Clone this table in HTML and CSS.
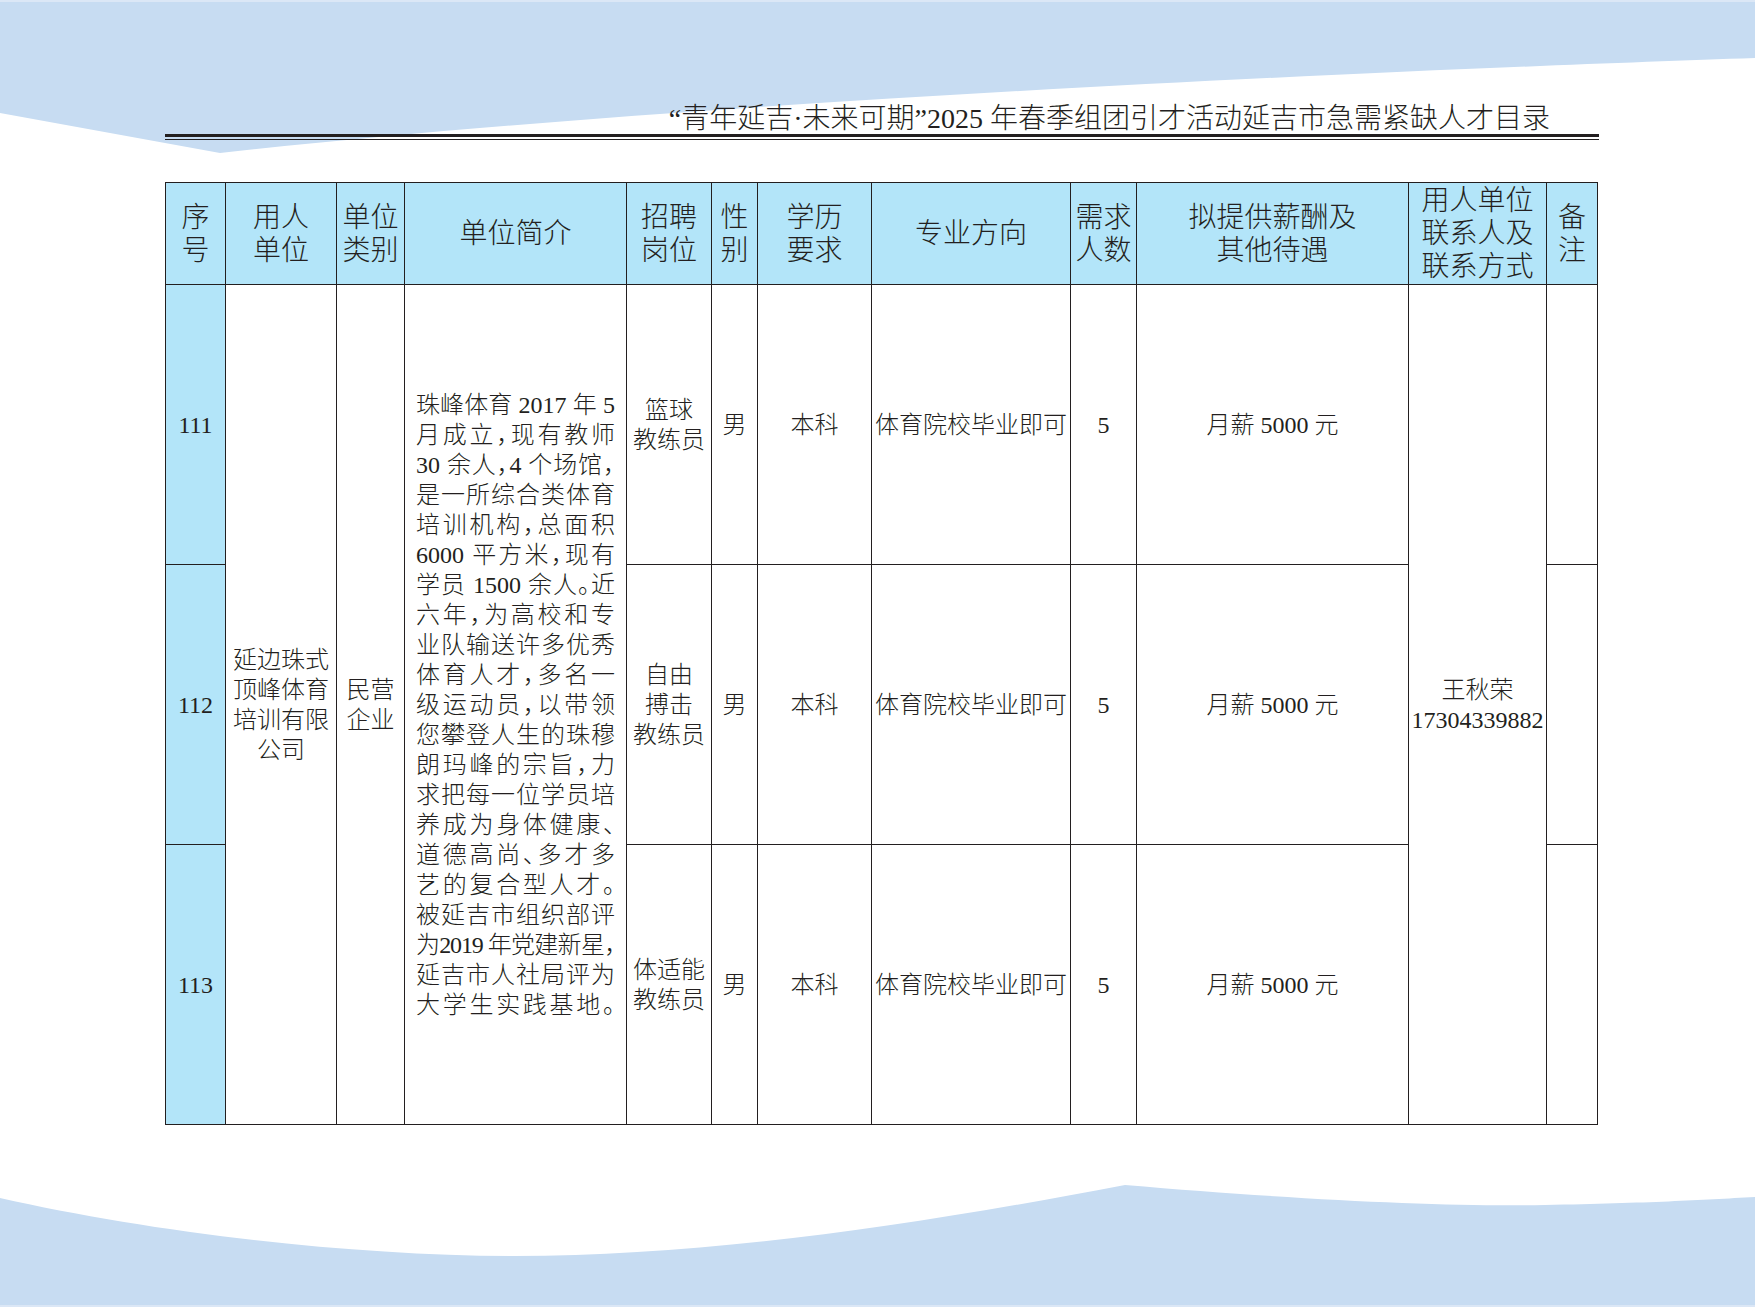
FILE: index.html
```html
<!DOCTYPE html>
<html lang="zh-CN">
<head>
<meta charset="utf-8">
<title>人才目录</title>
<link rel="stylesheet" href="styles.css">
</head>
<body>
<div class="page">
  <svg class="bg" viewBox="0 0 1755 1307" width="1755" height="1307" aria-hidden="true">
    <path class="wave" d="M0,0 H1755 V58 C1400,70 700,100 220,153 L0,113 Z"/>
    <path class="wave" d="M0,1198 C150,1232 350,1256 515,1256 C700,1256 900,1228 1125,1185 C1300,1200 1450,1207 1545,1205 C1650,1203 1700,1200 1755,1197 V1307 H0 Z"/>
    <rect class="edge" x="0" y="0" width="1755" height="2"/>
    <rect class="edge" x="0" y="1305" width="1755" height="2"/>
  </svg>
  <div class="sheet">
    <h1 class="title">“青年延吉·未来可期”2025 年春季组团引才活动延吉市急需紧缺人才目录</h1>
    <div class="rule"></div>
    <table class="grid">
      <colgroup>
        <col class="w-idx"><col class="w-org"><col class="w-type"><col class="w-intro">
        <col class="w-post"><col class="w-sex"><col class="w-edu"><col class="w-major">
        <col class="w-num"><col class="w-pay"><col class="w-contact"><col class="w-note">
      </colgroup>
      <thead>
        <tr class="head">
          <th>序<br>号</th>
          <th>用人<br>单位</th>
          <th>单位<br>类别</th>
          <th>单位简介</th>
          <th>招聘<br>岗位</th>
          <th>性<br>别</th>
          <th>学历<br>要求</th>
          <th>专业方向</th>
          <th>需求<br>人数</th>
          <th>拟提供薪酬及<br>其他待遇</th>
          <th>用人单位<br>联系人及<br>联系方式</th>
          <th>备<br>注</th>
        </tr>
      </thead>
      <tbody>
        <tr class="row">
          <td class="idx">111</td>
          <td rowspan="3">延边珠式<br>顶峰体育<br>培训有限<br>公司</td>
          <td rowspan="3">民营<br>企业</td>
          <td rowspan="3" class="intro">
            <span class="ln">珠峰体育 2017 年 5</span>
            <span class="ln">月成立，现有教师</span>
            <span class="ln">30 余人，4 个场馆，</span>
            <span class="ln">是一所综合类体育</span>
            <span class="ln">培训机构，总面积</span>
            <span class="ln">6000 平方米，现有</span>
            <span class="ln">学员 1500 余人。近</span>
            <span class="ln">六年，为高校和专</span>
            <span class="ln">业队输送许多优秀</span>
            <span class="ln">体育人才，多名一</span>
            <span class="ln">级运动员，以带领</span>
            <span class="ln">您攀登人生的珠穆</span>
            <span class="ln">朗玛峰的宗旨，力</span>
            <span class="ln">求把每一位学员培</span>
            <span class="ln">养成为身体健康、</span>
            <span class="ln">道德高尚、多才多</span>
            <span class="ln">艺的复合型人才。</span>
            <span class="ln">被延吉市组织部评</span>
            <span class="ln tight">为2019 年党建新星，</span>
            <span class="ln">延吉市人社局评为</span>
            <span class="ln">大学生实践基地。</span>
          </td>
          <td>篮球<br>教练员</td>
          <td>男</td>
          <td>本科</td>
          <td class="nw">体育院校毕业即可</td>
          <td>5</td>
          <td class="nw">月薪 5000 元</td>
          <td rowspan="3" class="nw">王秋荣<br>17304339882</td>
          <td></td>
        </tr>
        <tr class="row">
          <td class="idx">112</td>
          <td>自由<br>搏击<br>教练员</td>
          <td>男</td>
          <td>本科</td>
          <td class="nw">体育院校毕业即可</td>
          <td>5</td>
          <td class="nw">月薪 5000 元</td>
          <td></td>
        </tr>
        <tr class="row">
          <td class="idx">113</td>
          <td>体适能<br>教练员</td>
          <td>男</td>
          <td>本科</td>
          <td class="nw">体育院校毕业即可</td>
          <td>5</td>
          <td class="nw">月薪 5000 元</td>
          <td></td>
        </tr>
      </tbody>
    </table>
  </div>
</div>
</body>
</html>
```

FILE: styles.css
```css
html, body {
  margin: 0;
  padding: 0;
  background: #ffffff;
}

body {
  font-family: "Liberation Serif", "Noto Sans CJK SC", serif;
  color: #231f20;
}

.page {
  position: relative;
  width: 1755px;
  height: 1307px;
  overflow: hidden;
}

.bg {
  position: absolute;
  left: 0;
  top: 0;
  display: block;
}

.wave {
  fill: #c7dcf2;
}

.edge {
  fill: #dbe7f6;
}

.sheet {
  position: relative;
  padding: 104px 0 0 165px;
  width: 1434px;
}

.title {
  margin: 0;
  font-size: 28px;
  line-height: 30px;
  font-weight: 300;
  text-align: right;
  padding-right: 49px;
  white-space: nowrap;
}

.rule {
  border-top: 3px solid #231f20;
  border-bottom: 1px solid #231f20;
  height: 2px;
}

.grid {
  margin-top: 42px;
  border-collapse: collapse;
  table-layout: fixed;
  width: 1432px;
}

.w-idx { width: 60px; }
.w-org { width: 111px; }
.w-type { width: 68px; }
.w-intro { width: 222px; }
.w-post { width: 85px; }
.w-sex { width: 46px; }
.w-edu { width: 114px; }
.w-major { width: 199px; }
.w-num { width: 66px; }
.w-pay { width: 272px; }
.w-contact { width: 138px; }
.w-note { width: 51px; }

.grid th,
.grid td {
  border: 1px solid #231f20;
  padding: 0;
  text-align: center;
  vertical-align: middle;
  font-weight: 300;
}

.grid th {
  background: #b3e5f9;
  font-size: 28px;
  line-height: 33px;
}

.grid td {
  font-size: 24px;
  line-height: 30px;
}

.head {
  height: 102px;
}

.row {
  height: 280px;
}

.grid td.idx {
  background: #b3e5f9;
}

.nw {
  white-space: nowrap;
}

.grid td.intro {
  padding: 0 11px;
  text-align: justify;
  font-feature-settings: "halt";
}

.ln {
  display: block;
  text-align: justify;
  text-align-last: justify;
}

.ln.tight {
  letter-spacing: -1.2px;
}
```
